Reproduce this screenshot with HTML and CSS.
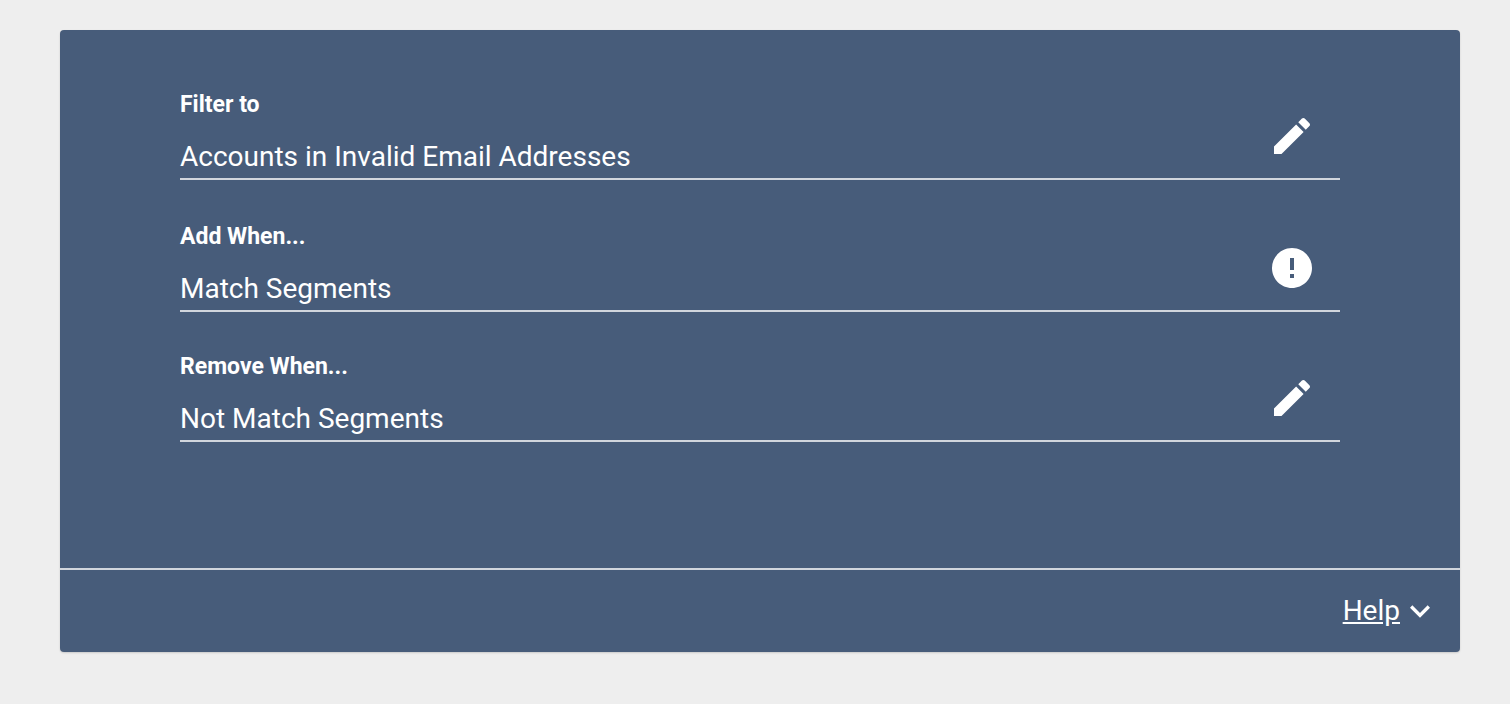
FILE: index.html
```html
<!DOCTYPE html>
<html lang="en">
<head>
<meta charset="utf-8">
<title>Filter settings</title>
<link rel="stylesheet" href="styles.css">
</head>
<body>
<main class="card">
  <section class="fields">
    <div class="field field-first">
      <div class="field-text">
        <div class="field-label">Filter to</div>
        <div class="field-value">Accounts in Invalid Email Addresses</div>
      </div>
      <svg class="field-icon" viewBox="0 0 24 24" aria-hidden="true"><path d="M3 17.25V21h3.75L17.81 9.94l-3.75-3.75L3 17.25zM20.71 7.04c.39-.39.39-1.02 0-1.41l-2.34-2.34c-.39-.39-1.02-.39-1.41 0l-1.83 1.83 3.75 3.75 1.83-1.83z"/></svg>
    </div>
    <div class="field field-second">
      <div class="field-text">
        <div class="field-label">Add When...</div>
        <div class="field-value">Match Segments</div>
      </div>
      <svg class="field-icon" viewBox="0 0 24 24" aria-hidden="true"><path fill-rule="evenodd" d="M12 2C6.48 2 2 6.48 2 12s4.480 10 10 10 10-4.480 10-10S17.520 2 12 2zM11 15h2v2h-2zM11 7h2v6h-2z"/></svg>
    </div>
    <div class="field field-third">
      <div class="field-text">
        <div class="field-label">Remove When...</div>
        <div class="field-value">Not Match Segments</div>
      </div>
      <svg class="field-icon" viewBox="0 0 24 24" aria-hidden="true"><path d="M3 17.25V21h3.75L17.81 9.94l-3.75-3.75L3 17.25zM20.71 7.04c.39-.39.39-1.02 0-1.41l-2.34-2.34c-.39-.39-1.02-.39-1.41 0l-1.83 1.83 3.75 3.75 1.83-1.83z"/></svg>
    </div>
  </section>
  <footer class="card-footer">
    <a class="help-link" href="#">Help</a>
    <svg class="help-icon" viewBox="0 0 24 24" aria-hidden="true"><path d="M16.59 8.59L12 13.17 7.41 8.59 6 10l6 6 6-6z"/></svg>
  </footer>
</main>
</body>
</html>
```
FILE: styles.css
```css
* { box-sizing: border-box; }
html, body { margin: 0; height: 100%; }
body {
  background: #eeeeee;
  padding: 30px 50px 52px 60px;
  font-family: Roboto, "Liberation Sans", sans-serif;
  color: #ffffff;
  overflow: hidden;
}
.card {
  height: 622px;
  background: #475c7a;
  border-radius: 4px;
  box-shadow: 0 1px 2px rgba(0, 0, 0, 0.15);
  display: flex;
  flex-direction: column;
}
.fields {
  height: 540px;
  padding: 0 120px;
  border-bottom: 2px solid rgba(255, 255, 255, 0.75);
}
.field {
  display: flex;
  align-items: flex-start;
  justify-content: space-between;
  border-bottom: 2px solid rgba(255, 255, 255, 0.75);
  padding-right: 24px;
}
.field-first { height: 150px; padding-top: 60px; }
.field-second { height: 132px; padding-top: 42px; }
.field-third { height: 130px; padding-top: 40px; }
.field-label {
  font-size: 23px;
  font-weight: 700;
  line-height: 30px;
}
.field-value {
  font-size: 28px;
  line-height: 36px;
  margin-top: 19px;
}
.field-icon {
  width: 48px;
  height: 48px;
  fill: #ffffff;
  margin-top: 22px;
}
.card-footer {
  flex: 1;
  display: flex;
  align-items: center;
  justify-content: flex-end;
  padding-right: 20px;
}
.help-link {
  color: #ffffff;
  font-size: 28px;
  line-height: 36px;
  text-decoration: underline;
}
.help-icon {
  width: 40px;
  height: 40px;
  fill: #ffffff;
}
```
